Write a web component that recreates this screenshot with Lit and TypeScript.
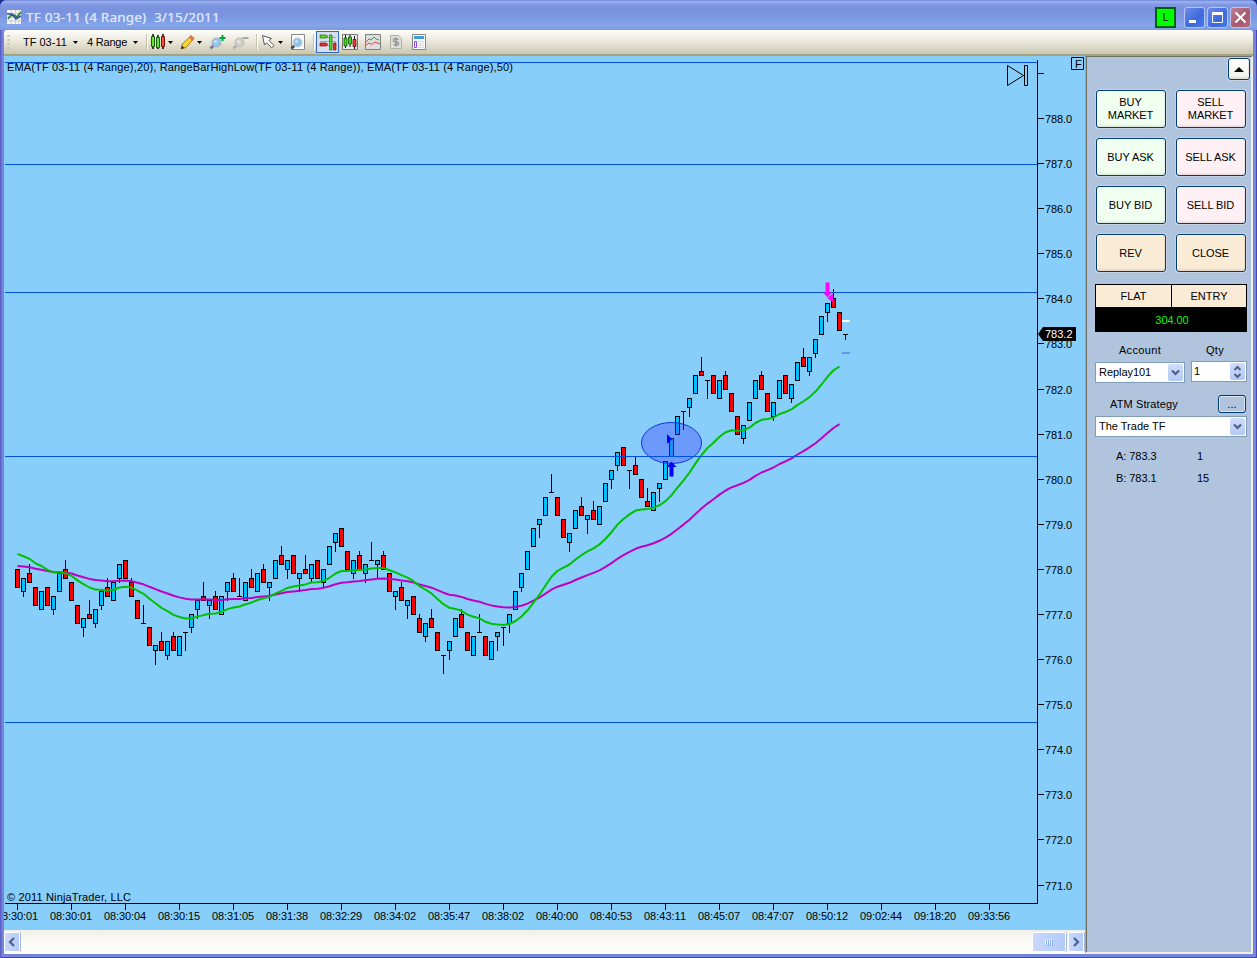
import { LitElement, html, svg, css } from "lit";
import { customElement } from "lit/decorators.js";

/* Bars in ticks above 770.0: r/b = down/up candle [high, bodyTop, bodyBottom, low], t = flat bar [high, price, price, low] */
const BARS = `r80,80,76,76 b78,78,75,74 r81,79,77,77 r76,76,72,72 b75,75,71,71 r76,76,72,72 b74,74,71,70 b79,79,75,75
r82,80,78,78 r77,77,73,73 r72,72,68,68 b69,69,67,65 r73,70,69,69 b71,71,68,67 b75,75,72,71 r78,76,74,74 b77,77,73,73
b81,81,78,77 r82,82,78,78 r78,77,74,74 r73,73,69,69 t72,68,68,68 r67,67,63,63 b63,63,62,59 r66,64,62,62 b64,64,61,60
r66,65,62,62 b65,65,61,61 t66,66,66,62 b70,70,67,66 b73,73,71,69 r77,74,73,73 b73,73,72,69 r75,74,71,71 b74,74,70,70
b77,77,75,73 r79,78,75,75 t78,74,74,74 b77,77,73,73 r80,78,76,76 b79,79,75,75 r81,80,77,77 b77,77,76,73 b82,82,78,78
r85,83,81,81 b82,82,80,78 r83,83,79,79 b79,79,78,75 r83,80,79,79 b81,81,78,77 r82,82,78,78 b80,80,77,76 b85,85,81,81
b88,88,86,84 r89,89,85,85 r84,84,80,80 b82,82,79,78 r84,83,80,80 b81,81,79,77 t86,82,82,82 b82,82,81,78 r84,83,80,80
r79,79,75,75 b75,75,74,71 r77,76,73,73 b73,73,72,69 r74,74,70,70 r70,69,66,66 b68,68,65,64 r71,69,67,67 r66,66,62,62
t61,61,61,57 b64,64,62,60 b69,69,65,65 r71,70,67,67 r66,66,62,62 b65,65,61,61 t70,66,66,66 r65,65,61,61 b64,64,60,60
b66,66,65,62 t67,67,67,63 b70,70,68,66 b75,75,71,71 b79,79,76,75 b84,84,80,80 b89,89,85,85 b91,91,90,87 b96,96,92,92
t101,97,97,97 r96,96,92,92 r91,91,87,87 b88,88,86,84 b93,93,89,89 r96,94,92,92 b92,92,91,88 r95,93,91,91 b94,94,90,90
b99,99,95,95 b102,102,100,98 b106,106,103,102 r107,107,103,103 t102,102,102,98 r105,103,101,101 r100,100,96,96
r98,95,94,94 b97,97,93,93 b99,99,98,95 b104,104,100,100 b109,109,105,105 b114,114,110,110 t115,115,115,111
b118,118,116,114 b123,123,119,119 r127,124,123,123 t122,122,122,118 r123,123,119,119 b122,122,118,118 r124,123,120,120
r119,119,115,115 r114,114,110,110 b112,112,109,108 b117,117,113,113 b122,122,118,118 r124,123,120,120 r119,119,115,115
b117,117,114,113 b122,122,118,118 r123,123,119,119 b121,121,118,117 b126,126,122,122 r129,127,125,125 b127,127,124,123
b131,131,128,127 b136,136,132,132 b139,139,137,135 r142,140,138,138 r137,137,133,133 t132,132,132,131`
  .split(/\s+/)
  .map((s) => ({ kind: s[0], v: s.slice(1).split(",").map(Number) }));

const yOf = (tick: number) => 118 + (180 - tick) * 4.5118;
const row = (tick: number) => Math.floor(yOf(tick) + (tick >= 104 && tick <= 128 ? 0.4 : 0.1));
const xOf = (i: number) => 17 + i * 6;

function ema(period: number, seed: number): string {
  const k = 2 / (period + 1);
  let e = seed;
  return BARS.slice(0, -1)
    .map((b, i) => {
      const close = b.kind === "r" ? b.v[2] : b.v[1];
      if (i) e += (close - e) * k;
      return `${xOf(i) + 0.5},${(yOf(e) + 0.5).toFixed(1)}`;
    })
    .join(" ");
}

const TIMES = ["08:30:01", "08:30:01", "08:30:04", "08:30:15", "08:31:05", "08:31:38", "08:32:29", "08:34:02", "08:35:47", "08:38:02",
  "08:40:00", "08:40:53", "08:43:11", "08:45:07", "08:47:07", "08:50:12", "09:02:44", "09:18:20", "09:33:56"];
const LEVELS = [62, 164, 292, 456, 722];

@customElement("price-chart")
class PriceChart extends LitElement {
  static styles = css`
    :host { display: block; width: 1081px; height: 874px; }
    svg { display: block; background: #87cefa; }
    text { font: 11px "Liberation Sans", sans-serif; fill: #000; }
    .crisp { shape-rendering: crispEdges; }
    .level { fill: #0050e0; }
    .line { fill: none; stroke-width: 2; stroke-linejoin: round; }
    .slow { stroke: #c000c0; }
    .fast { stroke: #00c000; }
    .mark { fill: none; stroke: #000; stroke-width: 1; }
    .tagtext { fill: #fff; }
  `;
  render() {
    return html`<svg width="1081" height="874" viewBox="4 56 1081 874">
      <g class="crisp">
        ${BARS.map((b, i) => {
          const x = xOf(i);
          const [h, t, bt, l] = b.v.map(row);
          return svg`<rect x=${x} y=${h} width="1" height=${l - h + 1}></rect>
            <rect x=${x - 2} y=${t} width="5" height=${bt - t + 1}></rect>
            ${b.kind === "t" ? "" : svg`<rect x=${x - 1} y=${t + 1} width="3" height=${bt - t - 1} fill=${b.kind === "r" ? "#f00" : "#00bfff"}></rect>`}`;
        })}
      </g>
      <polyline class="line slow" points=${ema(50, 80.8)}></polyline>
      <polyline class="line fast" points=${ema(20, 83.5)}></polyline>
      <ellipse cx="671.5" cy="443" rx="30" ry="20.5" fill="rgba(60,60,255,.36)" stroke="#1432e8"></ellipse>
      <path fill="#00f" d="M671.5 461.5l5 5.5h-3v9.500h-4v-9.500h-3zM667 434v10l5-5z"></path>
      <g class="crisp">${LEVELS.map((y) => svg`<rect class="level" x="5" y=${y} width="1032" height="1"></rect>`)}</g>
      <path fill="#f0f" d="M825.500 282.500h4v10h2.500l-4.500 5l-4.500-5h2.500zM827.500 298l5.500-4.500v9z"></path>
      <g class="crisp">
        <rect x="842" y="320" width="8" height="2" fill="#fff"></rect>
        <rect x="842" y="352" width="8" height="2" fill="#6495ed"></rect>
        <rect x="1037" y="60" width="1" height="844"></rect>
        <rect x="5" y="903" width="1033" height="1"></rect>
        <rect x="1038" y="73" width="6" height="1"></rect>
        ${Array.from({ length: 18 }, (_, i) => svg`<rect x="1038" y=${row(180 - i * 10)} width="6" height="1"></rect>`)}
        ${TIMES.map((_, i) => svg`<rect x=${17 + i * 54} y="904" width="1" height="6"></rect>`)}
      </g>
      ${Array.from({ length: 18 }, (_, i) => svg`<text x="1045" y=${row(180 - i * 10) + 5} textLength="27">${788 - i}.0</text>`)}
      ${TIMES.map((t, i) => svg`<text x=${-4 + i * 54} y="920" textLength="42">${t}</text>`)}
      <path d="M1038 334l5-7h33v14h-33z"></path>
      <text class="tagtext" x="1045" y="338" textLength="27.500">783.2</text>
      <text x="7" y="71" textLength="506">EMA(TF 03-11 (4 Range),20), RangeBarHighLow(TF 03-11 (4 Range)), EMA(TF 03-11 (4 Range),50)</text>
      <text x="7" y="901" textLength="124">© 2011 NinjaTrader, LLC</text>
      <path class="mark" d="M1007.500 65.500v20l16-10zM1024.500 65.500h3v20h-3z"></path>
      <path class="mark" d="M1071.500 57.500h12v12h-12z"></path>
      <text x="1075" y="68">F</text>
    </svg>`;
  }
}

@customElement("scroll-strip")
class ScrollStrip extends LitElement {
  static styles = css`
    :host { display: flex; height: 24px; box-sizing: border-box; padding: 1px 1px 1px 0; background: linear-gradient(#f0eee8, #fbfbf8 45%, #fefefc); }
    .btn { width: 16px; height: 20px; margin-top: 1px; box-sizing: border-box; border: 1px solid #fff; border-radius: 2px;
      background: linear-gradient(90deg, #c9d8fc, #b4cafa); display: grid; place-items: center; box-shadow: 1px 0 0 #9db5e0; }
    .gap { flex: 1; }
    .thumb { width: 34px; margin-right: 2px; }
  `;
  render() {
    return html`<div class="btn"><svg width="8" height="10"><path d="M6 1L2 5l4 4" fill="none" stroke="#4d6185" stroke-width="2.200"></path></svg></div>
      <div class="gap"></div>
      <div class="btn thumb"><svg width="8" height="7"><path d="M.5 0v6M2.500 0v6M4.500 0v6M6.500 0v6" stroke="#eef4fe"></path><path d="M1.500 1v6M3.500 1v6M5.500 1v6M7.500 1v6" stroke="#8cb0f8"></path></svg></div>
      <div class="btn"><svg width="8" height="10"><path d="M2 1l4 4-4 4" fill="none" stroke="#4d6185" stroke-width="2.200"></path></svg></div>`;
  }
}

const chevron = svg`<path d="M1 1.500l3.500 3.500 3.500-3.500" fill="none" stroke="#4d6185" stroke-width="2.200"></path>`;

@customElement("order-panel")
class OrderPanel extends LitElement {
  static styles = css`
    :host { display: flex; flex-direction: column; box-sizing: border-box; width: 168px; height: 898px; background: #b0c4de;
      border-left: 1px solid #aca899; border-right: 2px solid #f1efe2; border-bottom: 2px solid #f1efe2; border-top: 1px solid #716f64;
      box-shadow: inset 1px 0 0 #716f64; padding: 1px 0 0 9px; font: 11px/13px "Liberation Sans", sans-serif; color: #000; }
    .top { display: flex; justify-content: flex-end; padding-right: 1px; height: 32px; }
    .xp { box-sizing: border-box; border: 1px solid #003c74; border-radius: 3px; display: grid; place-items: center; text-align: center;
      box-shadow: inset -1px -2px 1px #0001, inset 1px 1px 0 #fff8, 0 0 0 1px #ffffff40; }
    .up { width: 22px; height: 22px; background: linear-gradient(#fff, #f0f0ea); }
    .grid { display: grid; grid-template-columns: 70px 70px; grid-auto-rows: 38px; gap: 10px; padding-left: 1px; }
    .grid .xp { letter-spacing: -.08px; padding-right: 1px; }
    .buy { background: #f0fff0; } .sell { background: #fff0f5; } .neutral { background: #faebd7; }
    .status { width: 152px; height: 48px; box-sizing: border-box; margin-top: 12px; background: #000; padding: 1px; display: grid;
      grid-template: 22px 24px / 75px 74px; gap: 0 1px; text-align: center; line-height: 22px; }
    .cell { background: #faebd7; }
    .pnl { grid-column: 1 / 3; color: #0f0; line-height: 26px; padding-left: 2px; letter-spacing: -.05px; }
    .labels { display: flex; margin-top: 12px; letter-spacing: .35px; }
    .account { width: 90px; text-align: center; } .qty { width: 60px; text-align: center; }
    .fields { display: flex; gap: 6px; margin-top: 4px; }
    .box { box-sizing: border-box; background: #fff; border: 1px solid #7f9db9; height: 21px; display: flex; align-items: center;
      padding: 0 1px 0 3px; justify-content: space-between; }
    .combo { width: 90px; margin-top: 1px; letter-spacing: -.05px; }
    .spin { width: 56px; padding-left: 2px; line-height: 19px; }
    .wide { width: 152px; margin-top: 3px; }
    .drop { width: 15px; height: 17px; border-radius: 2px; background: linear-gradient(#cfdcfc, #b4c8f6); display: grid; place-items: center; }
    .atm { display: flex; margin-top: 12px; align-items: center; height: 18px; padding-left: 15px; letter-spacing: .12px; }
    .dots { width: 28px; height: 18px; margin-left: auto; margin-right: 5px; line-height: 10px; background: #b0c4de; box-shadow: inset 0 0 0 1px #fff9; }
    .quote { display: grid; grid-template-columns: 81px auto; padding-left: 21px; margin-top: 13px; row-gap: 9px; letter-spacing: -.05px; }
  `;
  render() {
    return html`<div class="top"><div class="xp up"><svg width="10" height="5"><path d="M5 0l5 5H0z"></path></svg></div></div>
      <div class="grid">
        <div class="xp buy">BUY<br />MARKET</div><div class="xp sell">SELL<br />MARKET</div>
        <div class="xp buy">BUY ASK</div><div class="xp sell">SELL ASK</div>
        <div class="xp buy">BUY BID</div><div class="xp sell">SELL BID</div>
        <div class="xp neutral">REV</div><div class="xp neutral">CLOSE</div>
      </div>
      <div class="status"><div class="cell">FLAT</div><div class="cell">ENTRY</div><div class="pnl">304.00</div></div>
      <div class="labels"><div class="account">Account</div><div class="qty">Qty</div></div>
      <div class="fields">
        <div class="box combo">Replay101<div class="drop"><svg width="9" height="7">${chevron}</svg></div></div>
        <div class="box spin">1<div class="drop"><svg width="9" height="14"><path d="M1.500 5l3-3 3 3M1.500 9l3 3 3-3" fill="none" stroke="#4d6185" stroke-width="2"></path></svg></div></div>
      </div>
      <div class="atm">ATM Strategy<div class="xp dots">...</div></div>
      <div class="box wide">The Trade TF<div class="drop"><svg width="9" height="7">${chevron}</svg></div></div>
      <div class="quote"><span>A: 783.3</span><span>1</span><span>B: 783.1</span><span>15</span></div>`;
  }
}

const magnifier = (lens: string, rim: string, handle: string) =>
  svg`<path d="M1.500 14.500l4-4" stroke=${handle} stroke-width="2.500"></path><circle cx="7.500" cy="8.500" r="4.300" fill=${lens} stroke=${rim} stroke-width="1.300"></circle><circle cx="6.500" cy="7.500" r="1.500" fill="#fff" opacity=".5"></circle>`;

@customElement("app-root")
class AppRoot extends LitElement {
  static styles = css`
    :host { display: block; width: 1257px; height: 958px; overflow: hidden; background: #10308c; }
    .window { display: flex; flex-direction: column; box-sizing: border-box; height: 958px; padding: 0 4px 4px; border-radius: 7px 7px 0 0;
      background: #7585dc; box-shadow: inset 1px 0 0 #5c60c8, inset -1px -1px 0 #4848b4, inset 2px 0 0 #6b72d4; overflow: hidden; }
    .title { display: flex; align-items: center; height: 30px; flex: none; margin: 0 -4px; padding: 4px 6px 0 7px; box-sizing: border-box;
      background: linear-gradient(#6e86d8 0, #a0b4f0 2px, #8299e4 4px, #7a92de 9px, #7c96e2 17px, #84a6ea 25px, #7e98e2 30px); }
    .name { font: 13.300px "Noto Sans", sans-serif; letter-spacing: .32px; color: #dbe4fa; margin: 0 auto 0 5px; white-space: pre; text-shadow: .3px 0 #dbe4fa; }
    .live { width: 21px; height: 21px; box-sizing: border-box; border: 2px solid #006400; background: #0f0; font: 11px/17px "Liberation Sans", sans-serif; text-align: center; margin-right: 8px; }
    .wb { width: 21px; height: 21px; box-sizing: border-box; border: 1px solid #b4c4f4; border-radius: 3px; margin-right: 2px; background: linear-gradient(135deg, #6d8ce8, #3c68dc 60%, #4a78ea); }
    .close { background: linear-gradient(135deg, #c08098, #a8586c 60%, #b46c80); margin-right: 0; }
    .wb svg { display: block; }
    .tools { display: flex; align-items: center; height: 26px; flex: none; box-sizing: border-box; border-bottom: 2px solid #a5a283;
      background: linear-gradient(#fdfdfb, #ece9dc 45%, #c9c6b2); border-radius: 3px 3px 0 0; padding-left: 3px; }
    .tools > svg { flex: none; display: block; }
    .label { font: 11px "Liberation Sans", sans-serif; white-space: nowrap; }
    .symbol { margin-left: 12px; width: 48px; }
    .range { margin-left: 9px; width: 44px; letter-spacing: -.2px; }
    .arrow { width: 5px; height: 3px; margin-left: 2px; }
    .sep { width: 1px; height: 16px; background: #c5c2b0; box-shadow: 1px 0 #fff; margin: 0 4px 0 7px; }
    .first { margin: 0 3px 0 8px; }
    .g { margin-left: 7px; }
    .near { margin-left: 6px; }
    .on { width: 21px; height: 20px; border: 1px solid #316ac5; background: #d5dff0; display: grid; place-items: center; margin: 0 -4px 0 -2px; }
    .wide { margin-left: 8px; }
    .work { display: flex; flex: none; }
  `;
  render() {
    const arrow = html`<svg class="arrow" viewBox="0 0 5 3"><path d="M0 0h5L2.500 3z"></path></svg>`;
    return html`<div class="window">
      <div class="title">
        <svg width="14" height="14"><path d="M0 0h14v14H0z" fill="#f4f4f4"></path><path d="M0 3.500h14M0 7.500h14M0 11h14M4 0v14M8.500 0v14M12 0v14" stroke="#bbb" stroke-width=".7"></path><path d="M1 9l2-3 4-1 3 2 4-5" fill="none" stroke="#208030" stroke-width="1.600"></path><path d="M0 4l5 0 4 5 5-3" fill="none" stroke="#284c9c" stroke-width="1.500"></path></svg>
        <div class="name">TF 03-11 (4 Range)  3/15/2011</div>
        <div class="live">L</div>
        <div class="wb"><svg width="19" height="19"><path d="M4 12h7v3H4z" fill="#fff"></path></svg></div>
        <div class="wb"><svg width="19" height="19"><path d="M4.500 4.500h10v10h-10z" fill="none" stroke="#fff"></path><path d="M4 4h11v3H4z" fill="#fff"></path></svg></div>
        <div class="wb close"><svg width="19" height="19"><path d="M4.500 4.500l10 10M14.500 4.500l-10 10" stroke="#fff" stroke-width="2"></path></svg></div>
      </div>
      <div class="tools">
        <svg width="4" height="16"><path d="M1.500 1v15" stroke="#c4c1b0" stroke-width="2" stroke-dasharray="2 2"></path></svg>
        <span class="label symbol">TF 03-11</span>${arrow}<span class="label range">4 Range</span>${arrow}
        <div class="sep first"></div>
        <svg width="16" height="16"><path d="M3 0v15M8 1v14M13 0v15" stroke="#111" stroke-width="1.600"></path><path d="M1.500 2.500h3v10h-3zM6.500 3.500h3v10h-3z" fill="#5fe82c" stroke="#1c5a10"></path><path d="M11.500 2.500h3v10h-3z" fill="#f8503c" stroke="#701410"></path></svg>${arrow}
        <svg class="g" width="15" height="16"><path d="M1 15l1.500-5L11 1.500 14 4.500 6 13.500z" fill="#fbd62c" stroke="#a07c18"></path><path d="M11 1.500L14 4.500l-2 2.500L9 3.500z" fill="#e8705c"></path><path d="M1 15l1-3.500 2.500 2.500z" fill="#333"></path></svg>${arrow}
        <svg class="g" width="17" height="16">${magnifier("#94c6ec", "#a3b4ca", "#6a7894")}<path d="M13.500 1v6M10.500 4h6" stroke="#06a23c" stroke-width="2"></path></svg>
        <svg class="near" width="17" height="16">${magnifier("#d0d0ca", "#bfbfb9", "#b0b0aa")}<path d="M10.500 4h6" stroke="#aaa" stroke-width="2"></path></svg>
        <div class="sep"></div>
        <svg width="15" height="16"><path d="M1.500 1.500l2 9.500 2.200-2.200 5 5 2.300-2.300-5-5 2.500-2z" fill="#fff" stroke="#555"></path></svg>${arrow}
        <svg class="g" width="16" height="16"><path d="M1.500.5h13v15h-13z" fill="#fafafa" stroke="#888"></path>${magnifier("#8fc3ea", "#b8c8da", "#444")}</svg>
        <div class="sep"></div>
        <div class="on"><svg width="18" height="18"><path d="M1 4.500h16M1 8.500h16M1 12.500h16" stroke="#aaa"></path><path d="M1 2h6l2 1.500L7 5H1z" fill="#58d820" stroke="#276810" stroke-width=".7"></path><path d="M1 10h6l2 1.500L7 13H1z" fill="#e82c20" stroke="#801810" stroke-width=".7"></path><path d="M10.500 2h2.500v15h-2.500z" fill="#58d820" stroke="#276810" stroke-width=".7"></path><path d="M14.500 10h2.500v7h-2.500z" fill="#e82c20" stroke="#801810" stroke-width=".7"></path></svg></div>
        <svg class="g" width="16" height="16"><path d="M.5.5h15v15H.5z" fill="#eee" stroke="#777"></path><path d="M3.500 1v13M8 1v12M12.500 2v13" stroke="#111"></path><path d="M2 4h3v8H2zM6.500 3h3v7h-3z" fill="#42d818" stroke="#164c10" stroke-width=".8"></path><path d="M11 5.500h3v7h-3z" fill="#f03c30" stroke="#601410" stroke-width=".8"></path></svg>
        <svg class="g" width="16" height="16"><path d="M.5.5h15v15H.5z" fill="#dedede" stroke="#808080"></path><path d="M1 8l3-3 2 1 3-3 2 2 3 1" fill="none" stroke="#25a25c"></path><path d="M1 11l3-2 3 1.500L10 8l5 2" fill="none" stroke="#f04444"></path></svg>
        <svg class="g" width="16" height="16"><path d="M2.500 1.500h8l3 3v10h-11z" fill="#dededa" stroke="#b0b0aa"></path><path d="M10.500 5.500q-5-2-5 .5t2.500 2q3 0 2.500 2t-5 .5M8 3.500v9" fill="none" stroke="#92928e" stroke-width="1.400"></path></svg>
        <svg class="wide" width="14" height="16"><path d="M.5.5h13v15H.5z" fill="#fafaff" stroke="#858585"></path><path d="M2 3.500h10" stroke="#3d9fd4" stroke-width="3"></path><path d="M2.500 7.500h2v6h-2z" fill="#fff" stroke="#8a49ed"></path><path d="M6 7.500h6M6 9.500h6M6 11.500h6M6 13.500h6" stroke="#d4d8e4"></path></svg>
      </div>
      <div class="work">
        <div><price-chart></price-chart><scroll-strip></scroll-strip></div>
        <order-panel></order-panel>
      </div>
    </div>`;
  }
}
